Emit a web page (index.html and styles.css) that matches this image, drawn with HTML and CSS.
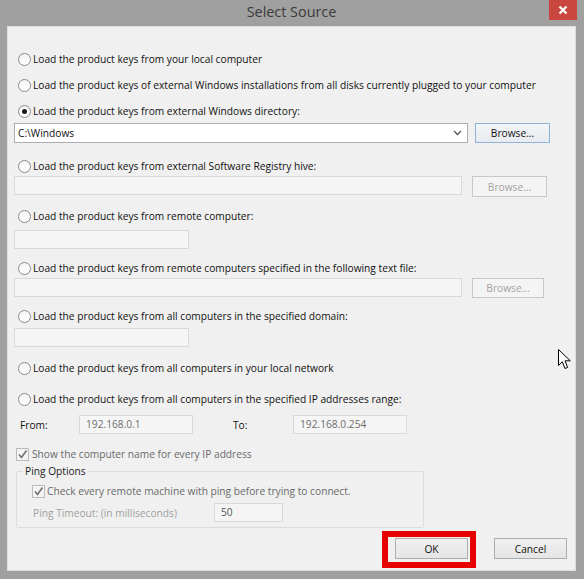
FILE: index.html
```html
<!DOCTYPE html>
<html lang="en">
<head>
  <meta charset="UTF-8" />
  <title>Select Source</title>
  <link rel="stylesheet" href="styles.css">
</head>
<body>

  <div class="window">
    <div class="titlebar">
      <span></span>
      <span class="title">Select Source</span>
      <span class="close">
        <svg width="10" height="10" viewBox="0 0 10 10"><path d="M1.5 1.5 L8.5 8.5 M8.5 1.5 L1.5 8.5" stroke="#fff" stroke-width="2.2"/></svg>
      </span>
    </div>

    <div class="client">
      <div class="opt r1"><span class="radio"></span>Load the product keys from your local computer</div>
      <div class="opt r2"><span class="radio"></span>Load the product keys of external Windows installations from all disks currently plugged to your computer</div>
      <div class="opt r3"><span class="radio checked"></span>Load the product keys from external Windows directory:</div>

      <div class="field-row combo-row">
        <div class="combo">
          <span>C:\Windows</span>
          <svg width="9" height="6" viewBox="0 0 9 6"><path d="M1 1 L4.5 4.5 L8 1" fill="none" stroke="#555" stroke-width="1.3"/></svg>
        </div>
        <button class="btn btn-focus">Browse...</button>
      </div>

      <div class="opt r4"><span class="radio"></span>Load the product keys from external Software Registry hive:</div>
      <div class="field-row row4">
        <div class="box wide"></div>
        <button class="btn" disabled>Browse...</button>
      </div>

      <div class="opt r5"><span class="radio"></span>Load the product keys from remote computer:</div>
      <div class="box short row5"></div>

      <div class="opt r6"><span class="radio"></span>Load the product keys from remote computers specified in the following text file:</div>
      <div class="field-row row6">
        <div class="box wide"></div>
        <button class="btn btn-narrow" disabled>Browse...</button>
      </div>

      <div class="opt r7"><span class="radio"></span>Load the product keys from all computers in the specified domain:</div>
      <div class="box short row7"></div>

      <div class="opt r8"><span class="radio"></span>Load the product keys from all computers in your local network</div>
      <div class="opt r9"><span class="radio"></span>Load the product keys from all computers in the specified IP addresses range:</div>

      <div class="range-row">
        <span class="range-label">From:</span>
        <div class="box ip">192.168.0.1</div>
        <span class="range-label to">To:</span>
        <div class="box ip">192.168.0.254</div>
      </div>

      <div class="check-row show-name">
        <span class="check">
          <svg width="11" height="11" viewBox="0 0 11 11"><path d="M2 5.5 L4.5 8.5 L9.5 1.5" fill="none" stroke="#707070" stroke-width="1.6"/></svg>
        </span>
        Show the computer name for every IP address
      </div>

      <fieldset class="ping-group">
        <legend>Ping Options</legend>
        <div class="check-row">
          <span class="check">
            <svg width="11" height="11" viewBox="0 0 11 11"><path d="M2 5.5 L4.5 8.5 L9.5 1.5" fill="none" stroke="#707070" stroke-width="1.6"/></svg>
          </span>
          Check every remote machine with ping before trying to connect.
        </div>
        <div class="timeout-row">
          <span class="timeout-label">Ping Timeout: (in milliseconds)</span>
          <div class="box timeout">50</div>
        </div>
      </fieldset>

      <div class="buttons">
        <button class="btn btn-dlg">OK</button>
        <button class="btn btn-dlg">Cancel</button>
      </div>

      <!-- annotation round the OK button -->
      <div class="highlight"></div>

      <svg class="cursor" width="14" height="22" viewBox="0 0 14 22">
        <path d="M0.5 0.5 L0.5 16.5 L4.3 12.8 L7 19.5 L9.6 18.4 L7 11.8 L12.3 11.8 Z" fill="#fff" stroke="#000" stroke-width="1"/>
      </svg>
    </div>
  </div>

</body>
</html>
```

FILE: styles.css
```css
body {
  margin: 0;
  font-family: 'Open Sans', 'Noto Sans', sans-serif;
  font-size: 10.2px;
  color: #111;
  background: #a0a0a0;
}

.window {
  width: 584px;
  height: 579px;
  box-sizing: border-box;
  background: #a0a0a0;
  padding: 0 8px 8px 7px;
  display: flex;
  flex-direction: column;
}

.titlebar {
  height: 26px;
  flex: none;
  display: grid;
  grid-template-columns: 1fr auto 1fr;
}

.title {
  font-size: 14.4px;
  color: #3b3b3b;
  line-height: 24px;
}

.close {
  justify-self: end;
  width: 28px;
  height: 20px;
  margin-right: -1px;
  background: #c9473f;
  display: flex;
  align-items: center;
  justify-content: center;
}

.client {
  flex: 1;
  position: relative;
  background: #f0f0f0;
  border: 1px solid #dedede;
  padding: 23px 8px 0 6px;
}

/* radio rows */
.opt {
  display: flex;
  align-items: center;
  height: 16px;
  margin-left: 4px;
  gap: 2px;
  white-space: nowrap;
}

.radio {
  width: 11px;
  height: 11px;
  border: 1px solid #8a8a8a;
  border-radius: 50%;
  background: linear-gradient(#f4f4f4, #ffffff);
  position: relative;
  flex: none;
}

.radio.checked::after {
  content: "";
  position: absolute;
  left: 3px;
  top: 3px;
  width: 5px;
  height: 5px;
  border-radius: 50%;
  background: #1a1a1a;
}

.r1 { margin-top: 1px; }
.r2 { margin-top: 10px; }
.r3 { margin-top: 10px; }
.r4 { margin-top: 15px; }
.r5 { margin-top: 11px; }
.r6 { margin-top: 11px; }
.r7 { margin-top: 10px; }
.r8 { margin-top: 13px; }
.r9 { margin-top: 15px; }

.field-row {
  display: flex;
  align-items: flex-start;
}

.combo-row { margin-top: 4px; gap: 7px; }
.row4 { margin-top: 2px; gap: 10px; }
.row5 { margin-top: 6px; }
.row6 { margin-top: 2px; gap: 10px; }
.row7 { margin-top: 4px; }

.combo {
  width: 444px;
  height: 18px;
  border: 1px solid #abadb3;
  background: #fff;
  display: flex;
  align-items: center;
  justify-content: space-between;
  padding: 0 5px 0 3px;
}

.box {
  height: 17px;
  border: 1px solid #d9d9d9;
  background: #f5f5f5;
}

.box.wide { width: 446px; }
.box.short { width: 173px; }

.btn {
  font-family: inherit;
  font-size: inherit;
  color: #111;
  height: 20px;
  width: 75px;
  padding: 0;
  border: 1px solid #adadad;
  background: linear-gradient(#f0f0f0, #e5e5e5);
}

.btn-focus {
  border-color: #8eb2d8;
  background: linear-gradient(#f3f5f8, #e8ebef);
}

.btn:disabled {
  color: #a3a3a3;
  border-color: #c8c8c8;
  background: #f4f4f4;
}

.row4 .btn { height: 21px; }
.btn-narrow { width: 72px; }

/* IP range */
.range-row {
  display: flex;
  align-items: center;
  margin-top: 8px;
  margin-left: 6px;
}

.range-label {
  width: 59px;
}

.range-label.to {
  width: 60px;
  margin-left: 40px;
}

.box.ip {
  width: 106px;
  padding-left: 6px;
  color: #6e6e6e;
  line-height: 17px;
}

.check-row {
  display: flex;
  align-items: center;
  gap: 3px;
  height: 16px;
  color: #6a6a6a;
  white-space: nowrap;
}

.show-name {
  margin-top: 12px;
  margin-left: 2px;
}

.check {
  width: 11px;
  height: 11px;
  border: 1px solid #bcbcbc;
  background: #f4f4f4;
  display: flex;
  align-items: center;
  justify-content: center;
  flex: none;
}

.ping-group {
  width: 391px;
  margin: 1px 0 0 2px;
  padding: 4px 0 5px 15px;
  border: 1px solid #dcdcdc;
  border-radius: 2px;
}

.ping-group legend {
  padding: 0 2px;
  margin-left: -9px;
  color: #222;
  line-height: 16px;
}

.ping-group .check-row {
  gap: 2px;
}

.timeout-row {
  display: flex;
  align-items: center;
  margin-top: 4px;
}

.timeout-label {
  color: #a0a0a0;
  width: 181px;
  margin-left: 1px;
}

.box.timeout {
  width: 61px;
  padding-left: 6px;
  color: #555;
  line-height: 17px;
}

.buttons {
  display: flex;
  justify-content: flex-end;
  gap: 26px;
  margin-top: 10px;
}

.btn-dlg {
  width: 73px;
  height: 21px;
}

.highlight {
  position: absolute;
  left: 374px;
  top: 504px;
  width: 82px;
  height: 25px;
  border: 6px solid #e60000;
}

.cursor {
  position: absolute;
  left: 550px;
  top: 322px;
}
```
